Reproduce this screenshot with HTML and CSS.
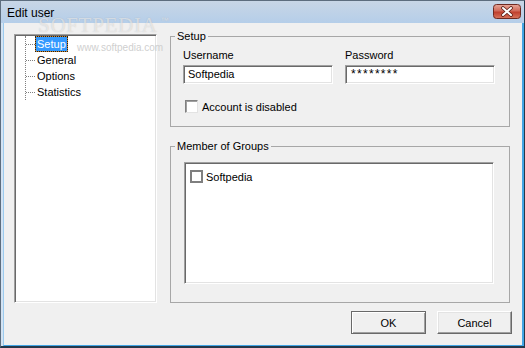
FILE: index.html
```html
<!DOCTYPE html>
<html>
<head>
    <meta charset="utf-8">
    <link rel="stylesheet" href="styles.css">
</head>
<body>
    <div class="window">
        <div class="titlebar">
            <span class="title">Edit user</span>
            <button class="close-btn" title="Close">
                <svg width="28" height="15" viewBox="0 0 28 15">
                    <defs>
                        <linearGradient id="cg" x1="0" y1="0" x2="0" y2="1">
                            <stop offset="0" stop-color="#e8a89a"/>
                            <stop offset="0.45" stop-color="#d06a5a"/>
                            <stop offset="0.55" stop-color="#c0402e"/>
                            <stop offset="1" stop-color="#d8765e"/>
                        </linearGradient>
                    </defs>
                    <rect x="0.5" y="0.5" width="27" height="14" rx="3" fill="url(#cg)" stroke="#6e2a22"/>
                    <path d="M10 4 L18 11 M18 4 L10 11" stroke="#5a2018" stroke-width="3.6" stroke-linecap="round"/>
                    <path d="M10 4 L18 11 M18 4 L10 11" stroke="#ffffff" stroke-width="2" stroke-linecap="round"/>
                </svg>
            </button>
        </div>

        <div class="frame">
            <div class="client">
                <div class="main">
                    <div class="tree">
                        <div class="tree-branch">
                            <div class="tree-items">
                                <div class="tree-item"><span class="tree-label selected">Setup</span></div>
                                <div class="tree-item"><span class="tree-label">General</span></div>
                                <div class="tree-item"><span class="tree-label">Options</span></div>
                                <div class="tree-item"><span class="tree-label">Statistics</span></div>
                            </div>
                        </div>
                    </div>

                    <div class="groups">
                        <fieldset class="group">
                            <legend>Setup</legend>
                            <div class="setup-body">
                                <div class="field-row">
                                    <div class="field">
                                        <span class="field-label">Username</span>
                                        <div class="textbox">Softpedia</div>
                                    </div>
                                    <div class="field">
                                        <span class="field-label">Password</span>
                                        <div class="textbox password">********</div>
                                    </div>
                                </div>
                                <div class="check-row">
                                    <span class="checkbox"></span>
                                    <span>Account is disabled</span>
                                </div>
                            </div>
                        </fieldset>

                        <fieldset class="group group-members">
                            <legend>Member of Groups</legend>
                            <div class="members-body">
                                <div class="listbox">
                                    <div class="list-item">
                                        <span class="checkbox flat"></span>
                                        <span>Softpedia</span>
                                    </div>
                                </div>
                            </div>
                        </fieldset>
                    </div>
                </div>

                <div class="buttons">
                    <button class="btn btn-default">OK</button>
                    <button class="btn">Cancel</button>
                </div>
            </div>
        </div>

        <!-- watermark overlay -->
        <div class="watermark">SOFTPEDIA<span class="tm">™</span></div>
        <div class="watermark-url">www.softpedia.com</div>
    </div>
</body>
</html>
```

FILE: styles.css
```css
* {
    box-sizing: border-box;
}

body {
    margin: 0;
    font-family: "Liberation Sans", Arial, sans-serif;
    font-size: 11px;
    color: #000;
}

.window {
    position: relative;
    width: 525px;
    height: 348px;
    display: flex;
    flex-direction: column;
    border: 1px solid #5d6d7e;
    border-right-color: #24384a;
    border-bottom: 2px solid #24384a;
    overflow: hidden;
}

.titlebar {
    height: 22px;
    display: flex;
    align-items: center;
    justify-content: space-between;
    padding: 0 3px 0 6px;
    background: linear-gradient(#c8d6e6, #b5cee9);
}

.title {
    font-size: 12px;
    line-height: 13px;
    margin-top: 2px;
}

.close-btn {
    width: 28px;
    height: 15px;
    padding: 0;
    border: none;
    background: none;
    display: flex;
    margin-top: -1px;
}

.frame {
    flex: 1;
    display: flex;
    padding-left: 2px;
    background: #d3e3f3;
}

.client {
    flex: 1;
    display: flex;
    flex-direction: column;
    background: #f0f0f0;
    border-left: 1px solid #9ccbee;
    border-right: 2px solid #41a5e5;
    border-bottom: 1px solid #41a5e5;
    padding: 6px 12px 0 10px;
}

.main {
    display: flex;
    gap: 13px;
    height: 274px;
}

/* Tree view */
.tree {
    width: 143px;
    margin-top: 5px;
    background: #fff;
    border: 1px solid;
    border-color: #a0a0a0 #fff #fff #a0a0a0;
    box-shadow: inset 1px 1px 0 #696969, inset -1px -1px 0 #e3e3e3;
    padding: 1px 0 0 10px;
}

.tree-branch {
    margin-top: 8px;
    border-left: 1px dotted #808080;
}

.tree-items {
    margin: -8px 0;
}

.tree-item {
    display: flex;
    align-items: center;
    height: 16px;
}

.tree-item::before {
    content: '';
    width: 9px;
    border-top: 1px dotted #808080;
}

.tree-label {
    line-height: 14px;
    padding: 0 1px;
    border: 1px dotted transparent;
}

.tree-label.selected {
    color: #fff;
    border-color: #202020;
    background: linear-gradient(#3399ff, #3399ff) padding-box, linear-gradient(#d08a30, #d08a30) border-box;
}

/* Group boxes */
.groups {
    flex: 1;
    display: flex;
    flex-direction: column;
}

.group {
    margin: 0;
    padding: 0;
    border: 1px solid #a7a7a7;
}

.group legend {
    padding: 0 2px;
    margin-left: 4px;
    line-height: 14px;
}

.group-members {
    flex: 1;
    margin-top: 12px;
}

.setup-body {
    padding: 6px 14px 13px 12px;
}

.field-row {
    display: flex;
    gap: 12px;
}

.field {
    width: 150px;
    display: flex;
    flex-direction: column;
    gap: 3px;
}

.field-label {
    line-height: 13px;
}

.textbox {
    height: 19px;
    line-height: 17px;
    padding: 0 4px;
    background: #fff;
    border: 1px solid;
    border-color: #a0a0a0 #fff #fff #a0a0a0;
    box-shadow: inset 1px 1px 0 #696969, inset -1px -1px 0 #e3e3e3;
}

.textbox.password {
    padding-left: 5px;
    font-size: 12px;
    letter-spacing: 1.3px;
}

.check-row {
    display: flex;
    align-items: center;
    gap: 4px;
    margin: 16px 0 0 2px;
    height: 13px;
}

.checkbox {
    width: 13px;
    height: 13px;
    flex-shrink: 0;
    background: #fff;
    border: 1px solid;
    border-color: #808080 #e3e3e3 #e3e3e3 #808080;
    box-shadow: inset 1px 1px 0 #a0a0a0;
}

.checkbox.flat {
    border: 2px solid #7f7f7f;
    box-shadow: none;
}

.members-body {
    padding: 9px 14px 0 13px;
}

.listbox {
    width: 310px;
    height: 122px;
    background: #fff;
    border: 1px solid;
    border-color: #a0a0a0 #fff #fff #a0a0a0;
    box-shadow: inset 1px 1px 0 #696969, inset -1px -1px 0 #e3e3e3;
    padding: 7px 0 0 5px;
}

.list-item {
    display: flex;
    align-items: center;
    gap: 3px;
    height: 13px;
}

/* Buttons */
.buttons {
    display: flex;
    justify-content: flex-end;
    gap: 11px;
    margin: 8px -2px 0 0;
}

.btn {
    width: 75px;
    height: 23px;
    padding: 0;
    font-family: inherit;
    font-size: 11px;
    color: #000;
    background: #f0f0f0;
    border: 1px solid;
    border-color: #fff #696969 #696969 #fff;
    box-shadow: inset -1px -1px 0 #a0a0a0, inset 1px 1px 0 #e3e3e3;
}

.btn-default {
    border-color: #696969;
    box-shadow: inset 1px 1px 0 #fff, inset -1px -1px 0 #a0a0a0;
}

/* Watermark */
.watermark {
    position: absolute;
    left: 37px;
    top: 12px;
    font-family: "Liberation Serif", serif;
    font-size: 21px;
    letter-spacing: 0.7px;
    color: rgba(255, 255, 255, 0.55);
    text-shadow: 0 0 1px rgba(110, 110, 110, 0.35);
    pointer-events: none;
}

.watermark .tm {
    font-family: "Liberation Sans", sans-serif;
    font-size: 8px;
    vertical-align: 9px;
    margin-left: 3px;
}

.watermark-url {
    position: absolute;
    left: 76px;
    top: 41px;
    font-size: 10px;
    color: #cfcfcf;
    pointer-events: none;
}
```
